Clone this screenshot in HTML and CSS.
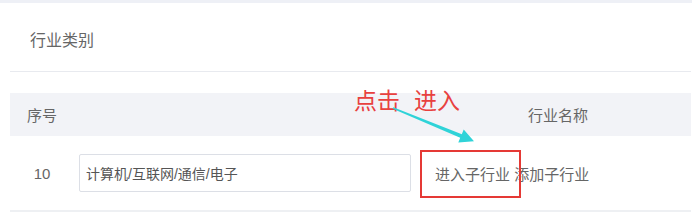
FILE: index.html
```html
<!DOCTYPE html>
<html lang="zh-CN">
<head>
    <meta charset="UTF-8">
    <title>行业类别</title>
    <link rel="stylesheet" href="styles.css">
</head>
<body>
    <div class="page">
        <div class="topbar"></div>
        <div class="panel">
            <div class="panel-title">行业类别</div>
            <div class="table">
                <div class="row head">
                    <div class="cell no">序号</div>
                    <div class="cell name"></div>
                    <div class="cell ops"><span class="ops-inner">行业名称</span></div>
                </div>
                <div class="row">
                    <div class="cell no">10</div>
                    <div class="cell name">
                        <input class="name-input" type="text" value="计算机/互联网/通信/电子">
                    </div>
                    <div class="cell ops">
                        <a class="op">进入子行业</a> <a class="op">添加子行业</a>
                    </div>
                </div>
            </div>
        </div>

        <!-- annotation layer -->
        <div class="note-text">点击<span class="note-gap"></span>进入</div>
        <svg class="note-arrow" width="100" height="50" viewBox="385 100 100 50">
            <polygon fill="#2fd3d8" points="393.3,107.3 461.8,134.2 463.7,129.5 474,141.3 458.3,142.5 460.2,137.8 392.7,108.7"/>
        </svg>
        <div class="note-box"></div>
    </div>
</body>
</html>
```

FILE: styles.css
```css
* {
    margin: 0;
    padding: 0;
    box-sizing: border-box;
}

body {
    background: #ffffff;
    font-family: 'Liberation Sans', 'Noto Sans CJK SC', sans-serif;
    color: #666666;
}

.page {
    position: relative;
    width: 692px;
    height: 220px;
    overflow: hidden;
}

.topbar {
    height: 3px;
    background: #eef0f6;
}

.panel {
    margin: 0 1px 0 10px;
}

.panel-title {
    height: 69px;
    padding: 26px 0 0 20px;
    font-size: 16px;
    line-height: 24px;
    color: #666666;
    border-bottom: 1px solid #e8eaef;
}

.table {
    margin-top: 21px;
}

.row {
    display: grid;
    grid-template-columns: 64px 347px 1fr;
    align-items: center;
    height: 76px;
    border-bottom: 2px solid #eef0f3;
}

.row.head {
    height: 43px;
    border-bottom: none;
    background: #f2f3f7;
    font-size: 15px;
}

.cell.no {
    text-align: center;
    font-size: 15px;
}

.row.head .cell.no {
    text-align: left;
    padding-left: 17px;
}

.cell.name {
    padding-left: 5px;
}

.name-input {
    display: block;
    width: 332px;
    height: 38px;
    padding: 0 6px;
    border: 1px solid #dcdfe6;
    border-radius: 2px;
    font-family: 'Liberation Sans', 'Noto Sans CJK SC', sans-serif;
    font-size: 14px;
    color: #555555;
    outline: none;
}

.cell.ops {
    padding-left: 14px;
    font-size: 15px;
    white-space: nowrap;
}

.ops-inner {
    display: block;
    width: 153px;
    text-align: right;
}

.op {
    color: #666666;
    cursor: pointer;
}

.note-text {
    position: absolute;
    left: 354px;
    top: 86px;
    font-family: 'Noto Sans CJK SC', sans-serif;
    font-size: 23px;
    line-height: 26px;
    color: #e8413f;
    white-space: nowrap;
}

.note-gap {
    display: inline-block;
    width: 14px;
}

.note-arrow {
    position: absolute;
    left: 385px;
    top: 100px;
}

.note-box {
    position: absolute;
    left: 420px;
    top: 150px;
    width: 101px;
    height: 48px;
    border: 2px solid #e53935;
}
```
